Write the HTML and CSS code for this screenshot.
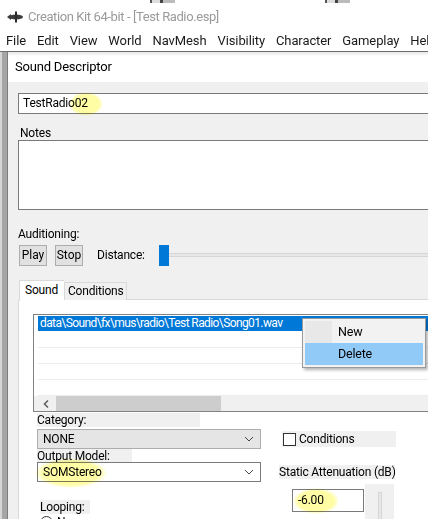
FILE: index.html
```html
<!DOCTYPE html>
<html lang="en">
<head>
    <meta charset="UTF-8">
    <meta name="viewport" content="width=device-width, initial-scale=1.0">
    <title>Creation Kit 64-bit - [Test Radio.esp]</title>
    <link rel="stylesheet" href="styles.css">
</head>
<body>
  <div class="top-strip"></div>

  <div class="titlebar">
    <svg class="app-icon" width="18" height="12" viewBox="0 0 18 12">
      <ellipse cx="10" cy="6" rx="7" ry="2.6" fill="#3c3c3c"/>
      <path d="M1 6 L5 3 L5 9 Z" fill="#3c3c3c"/>
      <rect x="9" y="0.5" width="2" height="11" fill="#2a2a2a"/>
    </svg>
    <span class="app-title">Creation Kit 64-bit - [Test Radio.esp]</span>
  </div>

  <div class="menubar">
    <span>File</span>
    <span>Edit</span>
    <span>View</span>
    <span>World</span>
    <span>NavMesh</span>
    <span>Visibility</span>
    <span>Character</span>
    <span>Gameplay</span>
    <span>Help</span>
  </div>

  <div class="workspace">
    <div class="gutter"></div>

    <div class="dialog">
      <div class="dialog-title">Sound Descriptor</div>

      <div class="dialog-body">
        <div class="textbox name-box">
          TestRadio<span class="marked">02<span class="glow glow-id"></span></span>
        </div>

        <div class="label notes-label">Notes</div>
        <div class="textbox notes-box"></div>

        <div class="label audit-label">Auditioning:</div>
        <div class="audit-row">
          <button class="btn">Play</button>
          <button class="btn">Stop</button>
          <span class="distance">Distance:</span>
          <div class="slider">
            <div class="slider-thumb"></div>
            <div class="slider-track"></div>
          </div>
        </div>

        <div class="tabs">
          <div class="tab active">Sound</div>
          <div class="tab">Conditions</div>
          <div class="tab-rest"></div>
        </div>

        <div class="tab-panel">
          <div class="listbox">
            <div class="list-row selected"><span>data\Sound\fx\mus\radio\Test Radio\Song01.wav</span></div>
            <div class="list-row"></div>
            <div class="list-row"></div>
            <div class="list-row"></div>
            <div class="list-row"></div>
            <div class="hscroll">
              <svg class="arrow" width="8" height="10" viewBox="0 0 8 10">
                <path d="M6 1.5 L2.5 5 L6 8.5" fill="none" stroke="#606060" stroke-width="1.6"/>
              </svg>
              <div class="hscroll-thumb"></div>
            </div>

            <div class="context-menu">
              <div class="menu-item">New</div>
              <div class="menu-item hover">Delete</div>
            </div>
          </div>

          <div class="lower">
            <div class="col-left">
              <div class="tag tag-category">Category:</div>
              <div class="combo combo-grey">
                <span>NONE</span>
                <svg width="10" height="6" viewBox="0 0 10 6"><path d="M1 1 L5 5 L9 1" fill="none" stroke="#444" stroke-width="1"/></svg>
              </div>
              <div class="tag tag-output">Output Model:</div>
              <div class="combo combo-white">
                <span class="marked">SOMStereo<span class="glow glow-model"></span></span>
                <svg width="10" height="6" viewBox="0 0 10 6"><path d="M1 1 L5 5 L9 1" fill="none" stroke="#444" stroke-width="1"/></svg>
              </div>
              <div class="tag tag-looping">Looping:</div>
              <div class="radio-row">
                <span class="radio"><span class="radio-dot"></span></span>
                <span>Never</span>
              </div>
            </div>

            <div class="col-right">
              <div class="check-row">
                <span class="checkbox"></span>
                <span>Conditions</span>
              </div>
              <div class="tag tag-static">Static Attenuation (dB)</div>
              <div class="atten-row">
                <div class="textbox atten-box">
                  <span class="marked">-6.00<span class="glow glow-atten"></span></span>
                </div>
                <div class="vslider"><div class="vslider-line"></div></div>
              </div>
            </div>
          </div>
        </div>
      </div>
    </div>
  </div>
</body>
</html>
```

FILE: styles.css
```css
html, body {
  margin: 0;
  padding: 0;
}

body {
  width: 428px;
  height: 519px;
  overflow: hidden;
  background: #fff;
  font-family: Roboto, "Noto Sans", "Liberation Sans", sans-serif;
  font-size: 12px;
  letter-spacing: -0.2px;
  color: #000;
  white-space: nowrap;
}

.top-strip {
  height: 3px;
  background: repeating-linear-gradient(90deg, #fff 0 150px, #555 150px 152px, #ddd 152px 160px, #444 160px 163px, #bbb 163px 175px);
}

/* title + menu */
.titlebar {
  height: 27px;
  display: flex;
  align-items: center;
  padding-left: 6px;
  gap: 4px;
}

.app-title {
  font-size: 13px;
  letter-spacing: -0.4px;
  color: #9a9a9a;
}

.menubar {
  height: 21px;
  display: flex;
  align-items: center;
  padding-left: 6px;
  gap: 11px;
  font-size: 13px;
  letter-spacing: -0.1px;
  color: #1a1a1a;
  border-bottom: 1px solid #6f6f6f;
}

.workspace {
  display: flex;
  height: 470px;
}

.gutter {
  width: 7px;
  flex: none;
  background: linear-gradient(90deg, #d6d6d6 0 2px, #a6a6a6 2px 7px);
}

.dialog {
  flex: none;
  width: 470px;
  border-left: 1px solid #7d7d7d;
  background: #f0f0f0;
}

.dialog-title {
  height: 30px;
  line-height: 30px;
  padding-left: 7px;
  background: linear-gradient(#e6e6e6, #fff 4px);
  font-size: 13px;
}

.dialog-body {
  padding: 11px 0 0 10px;
}

.textbox {
  box-sizing: border-box;
  background: #fff;
  border: 1px solid #7a7a7a;
}

.name-box {
  height: 21px;
  line-height: 19px;
  padding-left: 4px;
}

.label {
  line-height: 14px;
}

.notes-label {
  margin-top: 12px;
  padding-left: 2px;
}

.notes-box {
  height: 70px;
}

.audit-label {
  margin-top: 17px;
  height: 17px;
}

/* audition controls */
.audit-row {
  display: flex;
  align-items: center;
  height: 22px;
  padding-left: 1px;
}

.btn {
  box-sizing: border-box;
  width: 28px;
  height: 21px;
  padding: 0;
  margin-right: 8px;
  background: #e1e1e1;
  border: 1px solid #adadad;
  font: inherit;
}

.distance {
  margin-left: 6px;
}

.slider {
  display: flex;
  align-items: center;
  margin-left: 14px;
  flex: 1;
  height: 21px;
}

.slider-thumb {
  width: 10px;
  height: 21px;
  background: #0078d7;
  flex: none;
}

.slider-track {
  flex: 1;
  height: 2px;
  background: #e7e7e7;
  border-top: 1px solid #d6d6d6;
  border-bottom: 1px solid #d6d6d6;
}

/* tabs */
.tabs {
  display: flex;
  align-items: flex-end;
  margin-top: 13px;
  height: 21px;
  padding-left: 1px;
}

.tab {
  box-sizing: border-box;
  height: 18px;
  line-height: 17px;
  padding: 0 3px;
  border: 1px solid #d9d9d9;
  border-bottom: none;
  background: #f0f0f0;
}

.tab.active {
  height: 21px;
  line-height: 18px;
  background: #fff;
  border-right: none;
  padding: 0 6px 0 5px;
  position: relative;
  top: 1px;
}

.tab-rest {
  flex: 1;
  border-bottom: 1px solid #d9d9d9;
}

.tab-panel {
  background: #fff;
  border-left: 1px solid #d9d9d9;
  padding: 14px 0 0 14px;
  height: 240px;
}

/* list */
.listbox {
  position: relative;
  box-sizing: border-box;
  height: 98px;
  border: 1px solid #828282;
  padding: 1px 0 0 4px;
  display: flex;
  flex-direction: column;
}

.list-row {
  height: 17px;
  border-bottom: 1px solid #ececec;
  box-sizing: border-box;
}

.list-row.selected {
  height: 15px;
  line-height: 15px;
  background: #0078d7;
  color: #fff;
  padding-left: 2px;
  letter-spacing: -0.6px;
  border-bottom: none;
  margin-bottom: 1px;
}

.hscroll {
  margin: auto 0 0 -4px;
  height: 16px;
  background: #f0f0f0;
  display: flex;
  align-items: center;
}

.hscroll .arrow {
  margin: 0 6px 0 8px;
}

.hscroll-thumb {
  width: 165px;
  height: 15px;
  background: #cdcdcd;
}

.context-menu {
  position: absolute;
  left: 268px;
  top: 3px;
  width: 118px;
  padding: 2px;
  background: #f2f2f2;
  border: 1px solid #9a9a9a;
  box-shadow: 2px 2px 3px rgba(0, 0, 0, 0.3);
  font-size: 12.5px;
}

.menu-item {
  height: 22px;
  line-height: 22px;
  padding-left: 33px;
  background: linear-gradient(90deg, #e8e8e8 0 27px, transparent 27px);
}

.menu-item.hover {
  background: #91c9f7;
}

/* lower form */
.lower {
  display: flex;
  padding-left: 4px;
  margin-top: 1px;
}

.col-left {
  width: 224px;
  display: flex;
  flex-direction: column;
  align-items: flex-start;
}

.tag {
  background: #f0f0f0;
  height: 14px;
  line-height: 14px;
}

.tag-category {
  width: 163px;
}

.tag-output {
  width: 95px;
}

.tag-looping {
  margin: 18px 0 0 3px;
  width: 50px;
}

.combo {
  box-sizing: border-box;
  width: 224px;
  height: 20px;
  display: flex;
  align-items: center;
  justify-content: space-between;
  padding: 0 6px 0 5px;
}

.combo-grey {
  margin-top: 2px;
  background: #e5e5e5;
  border: 1px solid #adadad;
}

.combo-white {
  margin-top: -1px;
  background: #fff;
  border: 1px solid #7a7a7a;
}

.radio-row {
  display: flex;
  align-items: center;
  gap: 4px;
  margin: 1px 0 0 3px;
}

.radio {
  box-sizing: border-box;
  width: 13px;
  height: 13px;
  border: 1px solid #333;
  border-radius: 50%;
  display: flex;
  align-items: center;
  justify-content: center;
}

.radio-dot {
  width: 5px;
  height: 5px;
  border-radius: 50%;
  background: #333;
}

.col-right {
  margin-left: 18px;
  display: flex;
  flex-direction: column;
  align-items: flex-start;
}

.check-row {
  display: flex;
  align-items: center;
  gap: 3px;
  width: 113px;
  height: 16px;
  margin: 18px 0 0 3px;
  padding-left: 1px;
  background: #f0f0f0;
}

.checkbox {
  box-sizing: border-box;
  width: 13px;
  height: 13px;
  border: 1px solid #333;
  background: #fff;
}

.tag-static {
  margin-top: 18px;
  width: 116px;
}

.atten-row {
  display: flex;
  margin: 5px 0 0 13px;
}

.atten-box {
  width: 72px;
  height: 23px;
  margin-top: 5px;
  line-height: 20px;
  padding-left: 5px;
}

.vslider {
  width: 29px;
  height: 40px;
  margin-left: 1px;
  background: #f0f0f0;
  display: flex;
  justify-content: center;
  padding-top: 8px;
  box-sizing: border-box;
}

.vslider-line {
  width: 2px;
  height: 40px;
  border: 1px solid #d6d6d6;
  background: #e7e7e7;
}

/* yellow marker highlights */
.marked {
  position: relative;
}

.glow {
  position: absolute;
  pointer-events: none;
  border-radius: 50%;
  background: radial-gradient(ellipse, rgba(255, 250, 90, 0.55) 55%, rgba(255, 250, 90, 0) 72%);
  mix-blend-mode: multiply;
}

.glow-id {
  left: -6px;
  top: -4px;
  width: 34px;
  height: 24px;
}

.glow-model {
  left: -8px;
  top: -7px;
  width: 72px;
  height: 30px;
}

.glow-atten {
  left: -5px;
  top: -5px;
  width: 46px;
  height: 26px;
}
```
